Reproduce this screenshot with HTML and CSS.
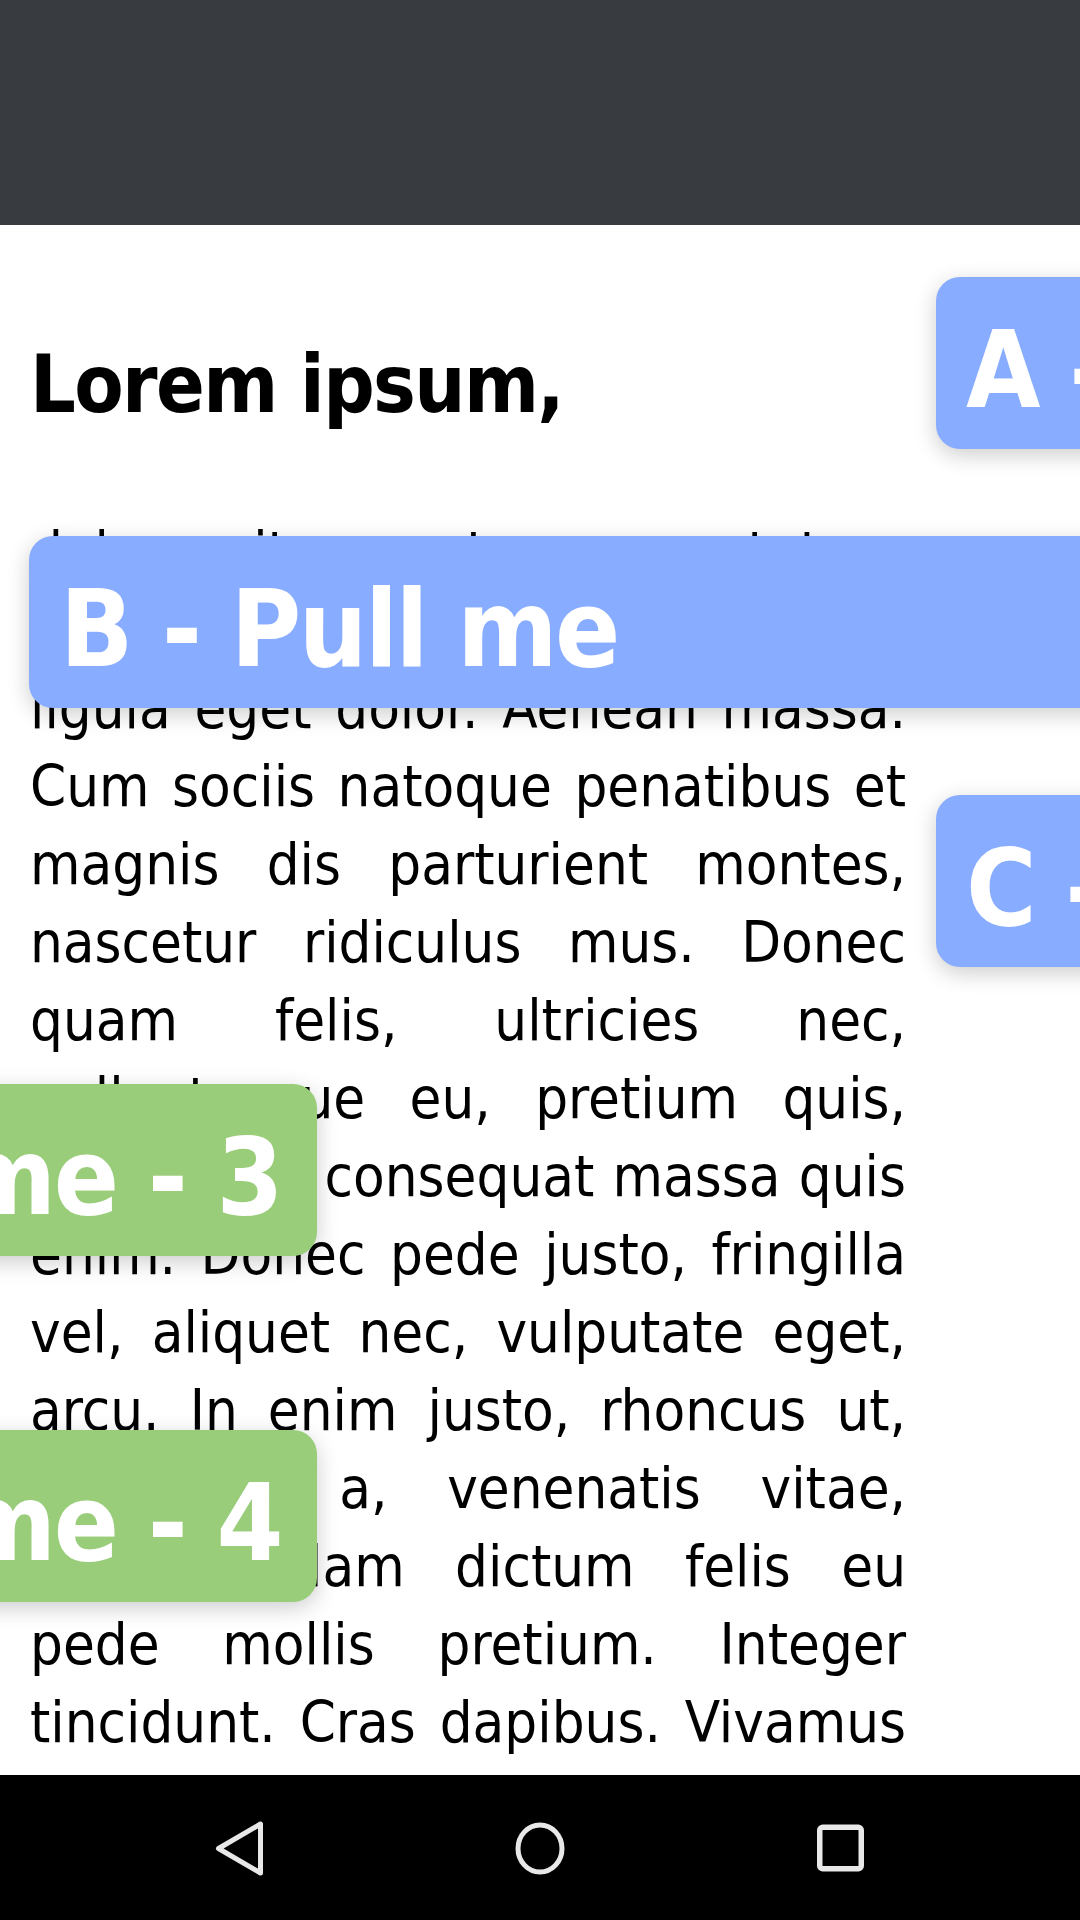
FILE: index.html
```html
<!DOCTYPE html>
<html>
<head>
<meta charset="utf-8">
<link rel="stylesheet" href="styles.css">
</head>
<body>
<div class="screen">
  <header class="appbar"></header>
  <main class="content">
    <h1 class="title">Lorem ipsum,</h1>
    <p class="text">dolor sit amet, consectetuer adipiscing elit. Aenean commodo ligula eget dolor. Aenean massa. Cum sociis natoque penatibus et magnis dis parturient montes, nascetur ridiculus mus. Donec quam felis, ultricies nec, pellentesque eu, pretium quis, sem. Nulla consequat massa quis enim. Donec pede justo, fringilla vel, aliquet nec, vulputate eget, arcu. In enim justo, rhoncus ut, imperdiet a, venenatis vitae, justo. Nullam dictum felis eu pede mollis pretium. Integer tincidunt. Cras dapibus. Vivamus elementum semper nisi. Aenean vulputate eleifend tellus.</p>

    <div class="tab tab-a">A - Pull me</div>
    <div class="tab tab-b">B - Pull me</div>
    <div class="tab tab-c">C - Pull me</div>
    <div class="tab tab-3">Pull me - 3</div>
    <div class="tab tab-4">Pull me - 4</div>
  </main>
  <nav class="navbar">
    <svg class="nav-icon" width="60" height="60" viewBox="0 0 60 60">
      <path d="M8.5 30.5 L50.5 6 L50.5 55 Z" fill="none" stroke="#e8e8e8" stroke-width="5" stroke-linejoin="round"/>
    </svg>
    <svg class="nav-icon" width="60" height="60" viewBox="0 0 60 60">
      <ellipse cx="30" cy="30.5" rx="22" ry="23.5" fill="none" stroke="#e8e8e8" stroke-width="5"/>
    </svg>
    <svg class="nav-icon" width="60" height="60" viewBox="0 0 60 60">
      <rect x="9.75" y="9.25" width="41.5" height="41.5" rx="3" fill="none" stroke="#e8e8e8" stroke-width="5.5"/>
    </svg>
  </nav>
</div>
</body>
</html>
```

FILE: styles.css
```css
html, body {
  margin: 0;
  padding: 0;
  background: #ffffff;
}

.screen {
  width: 1080px;
  height: 1920px;
  display: flex;
  flex-direction: column;
  overflow: hidden;
}

.appbar {
  height: 225px;
  flex: none;
  background: #383c40;
}

.content {
  flex: 1;
  position: relative;
  overflow: hidden;
  padding: 0 174px 0 30px;
  font-family: "DejaVu Sans Condensed", "DejaVu Sans", sans-serif;
  color: #000;
}

.title {
  margin: 110px 0 0;
  font-family: "DejaVu Sans Condensed", "DejaVu Sans", sans-serif;
  font-weight: bold;
  font-size: 80px;
  line-height: 100px;
  letter-spacing: -1.6px;
}

.text {
  margin: 79px 0 0;
  font-size: 57.6px;
  line-height: 78px;
  text-align: justify;
}

.tab {
  position: absolute;
  height: 172px;
  display: flex;
  align-items: center;
  box-sizing: border-box;
  padding-top: 14px;
  border-radius: 24px;
  color: #ffffff;
  font-family: "DejaVu Sans Condensed", "DejaVu Sans", sans-serif;
  font-weight: bold;
  font-size: 107px;
  letter-spacing: -2.4px;
  white-space: nowrap;
  box-shadow: 0 6px 22px rgba(0, 0, 0, 0.2);
}

.tab-a, .tab-b, .tab-c {
  background: #88acff;
}

.tab-a {
  left: 936px;
  top: 52px;
  width: 600px;
  padding-left: 30px;
}

.tab-b {
  left: 29px;
  top: 311px;
  width: 1200px;
  padding-left: 31px;
}

.tab-c {
  left: 936px;
  top: 570px;
  width: 600px;
  padding-left: 30px;
}

.tab-3, .tab-4 {
  background: #99cd7a;
  right: 763px;
  justify-content: flex-end;
  padding-right: 36px;
  width: 700px;
}

.tab-3 {
  top: 859px;
}

.tab-4 {
  top: 1205px;
}

.navbar {
  height: 145px;
  flex: none;
  background: #000;
  display: flex;
  align-items: center;
  gap: 240px;
  padding-left: 210px;
}

.nav-icon {
  display: block;
}
```
